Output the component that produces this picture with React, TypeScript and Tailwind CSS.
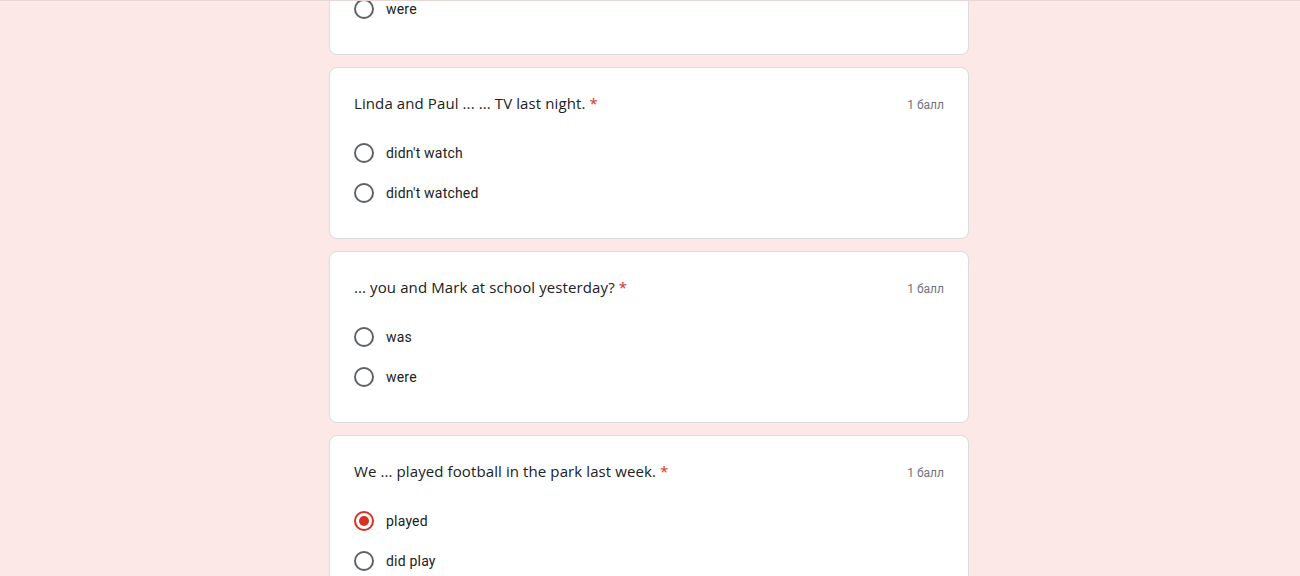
const questions = [
  {
    title: '... you and Mark at home last weekend?',
    options: ['was', 'were'],
    selected: -1,
  },
  {
    title: 'Linda and Paul ... ... TV last night.',
    options: ["didn't watch", "didn't watched"],
    selected: -1,
  },
  {
    title: '... you and Mark at school yesterday?',
    options: ['was', 'were'],
    selected: -1,
  },
  {
    title: 'We ... played football in the park last week.',
    options: ['played', 'did play'],
    selected: 0,
  },
];

function Radio({ checked }: { checked: boolean }) {
  if (checked) {
    return (
      <div className="w-5 h-5 rounded-full border-2 border-[#d93025] flex items-center justify-center">
        <div className="w-2.5 h-2.5 rounded-full bg-[#d93025]" />
      </div>
    );
  }
  return <div className="w-5 h-5 rounded-full border-2 border-[#5f6368]" />;
}

export default function App() {
  return (
    <div className="relative h-[576px] overflow-hidden bg-[#fce8e6] font-['Roboto',sans-serif]">
      <div className="absolute top-0 left-0 right-0 h-px bg-[#e6d6d5] z-10" />
      <div className="flex justify-center pr-[2px]">
        <div className="w-[640px] mt-[-117px] flex flex-col gap-3">
          {questions.map((q, i) => (
            <div key={i} className="bg-white border border-[#dadce0] rounded-lg px-6 pt-6 pb-[25px]">
              <div className="flex items-baseline justify-between h-6">
                <div className="text-[15px] text-[#202124] font-['Open_Sans',sans-serif] tracking-[0.1px]">
                  {q.title} <span className="text-[#d93025]">*</span>
                </div>
                <div className="text-xs text-[#70757a]">1 балл</div>
              </div>
              <div className="mt-[17px] flex flex-col">
                {q.options.map((o, j) => (
                  <div key={j} className="flex items-center h-10">
                    <Radio checked={q.selected === j} />
                    <span className="ml-3 text-sm text-[#202124] tracking-[0.2px]">{o}</span>
                  </div>
                ))}
              </div>
            </div>
          ))}
        </div>
      </div>
    </div>
  );
}
